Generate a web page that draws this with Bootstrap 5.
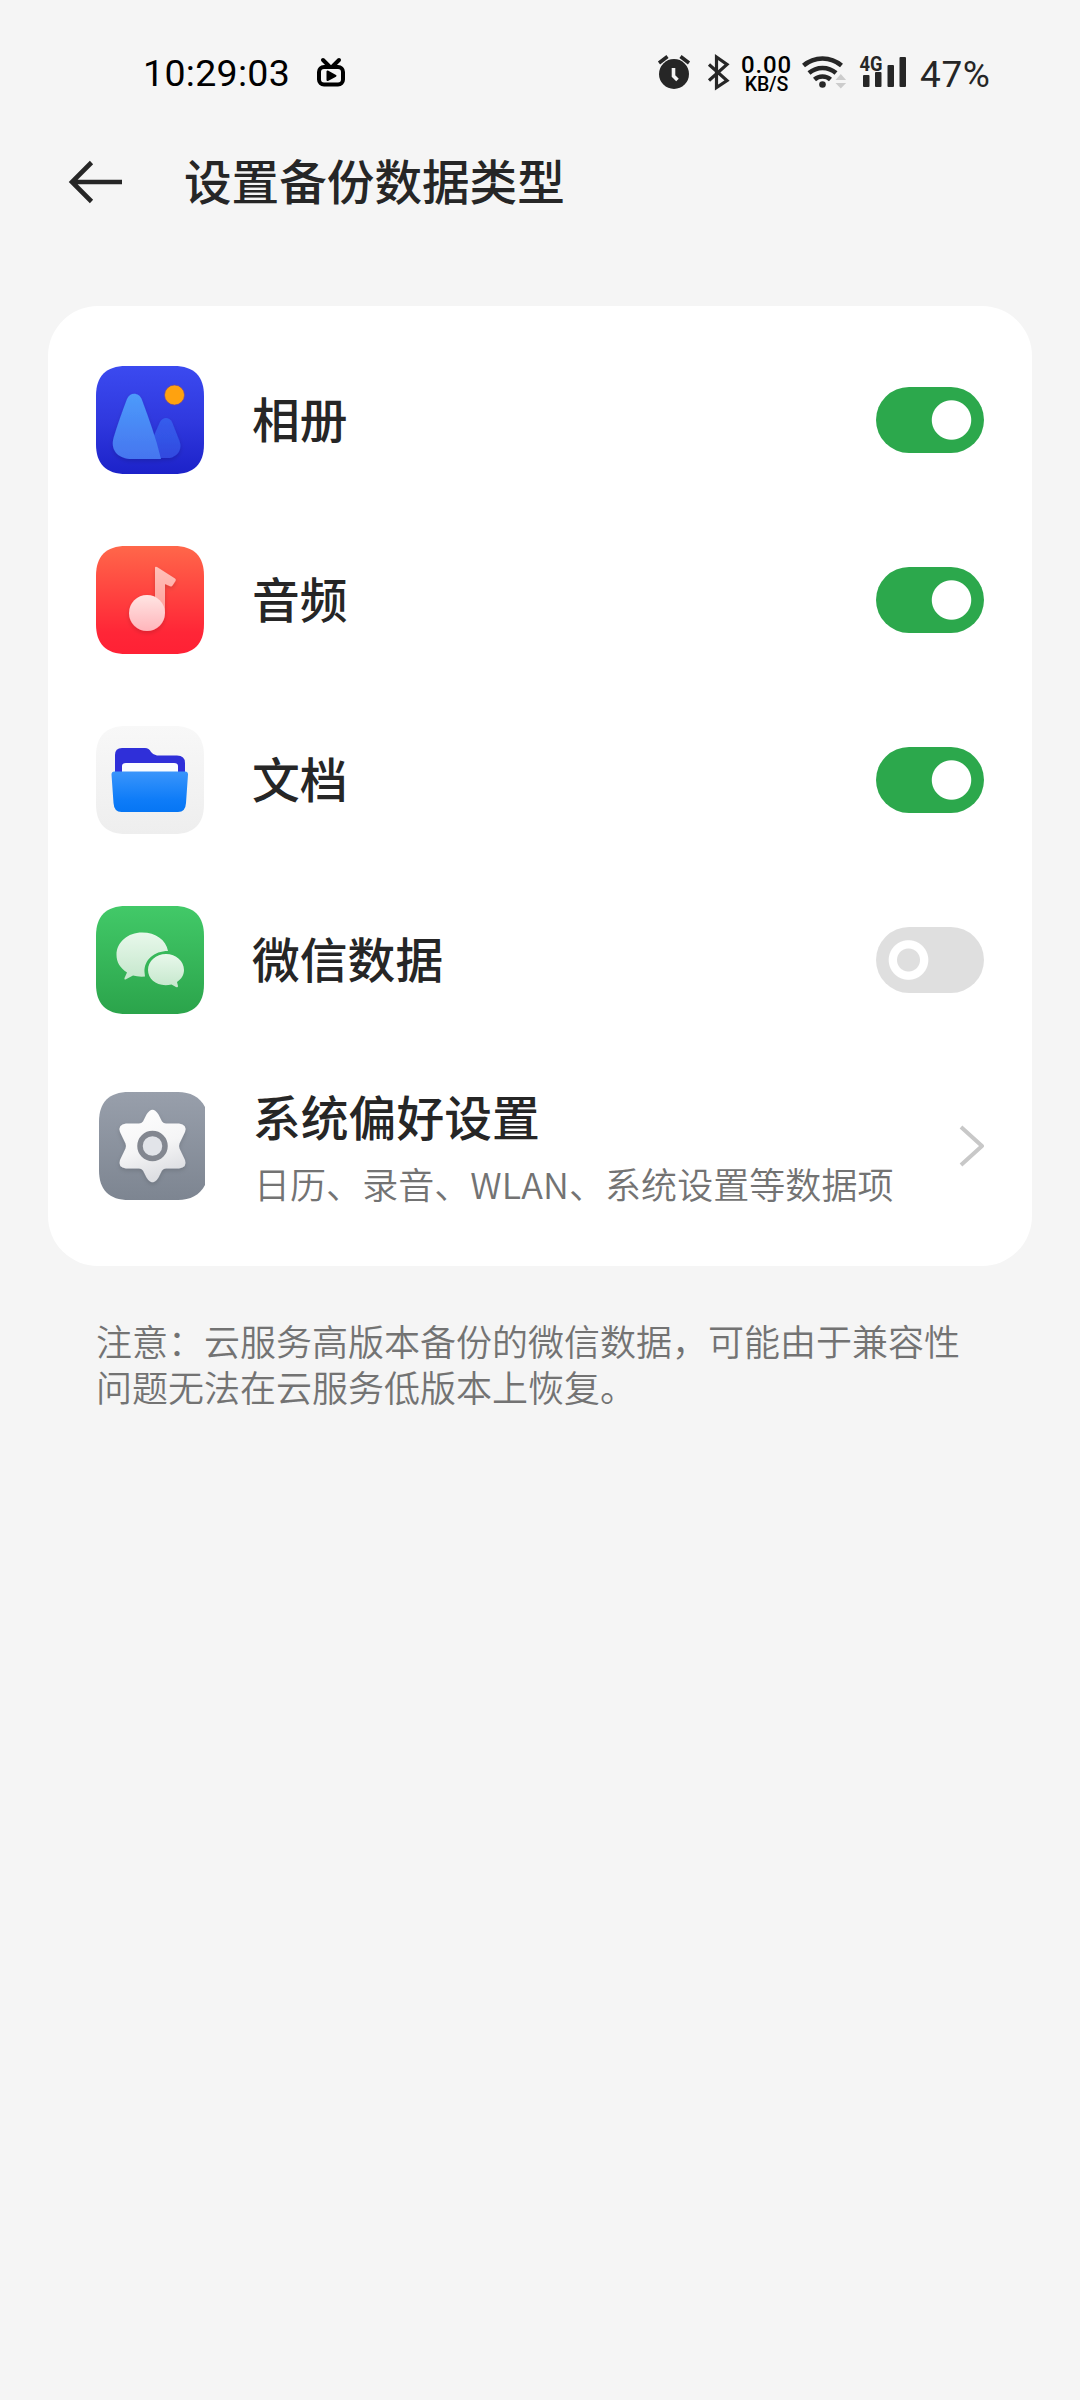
<!DOCTYPE html>
<html lang="zh-CN">
<head>
<meta charset="utf-8">
<meta name="viewport" content="width=device-width, initial-scale=1">
<title>设置备份数据类型</title>
<link rel="stylesheet" href="https://cdn.jsdelivr.net/npm/bootstrap@5.3.0/dist/css/bootstrap.min.css">
<style>
body{background:#f5f5f5;color:#262626;font-family:"Noto Sans CJK SC",sans-serif;min-height:2400px;overflow-x:hidden}
svg{display:block;flex:none}
.status-bar{height:146px;padding:0 89px 0 143px;font-family:Roboto,sans-serif;color:#000}
.clock{font-size:37.5px;line-height:146px;letter-spacing:.3px;width:174px}
.net{width:53px;margin-left:10px;text-align:center;font-weight:500;padding-top:53px}
.net-num{font-size:24px;line-height:24px;letter-spacing:.9px}
.net-unit{font-size:19.5px;line-height:15px;letter-spacing:-.1px}
.signal{margin-left:12px}
.battery{font-size:37px;line-height:149px;letter-spacing:.6px;color:#262626;margin-left:13px;width:71px;white-space:nowrap}
.app-bar{height:72px;padding-left:68px}
.page-title{font-size:47.6px;font-weight:500;line-height:68px;margin:0 0 0 60px;padding-bottom:4px}
.panel{margin:88px 48px 0;border:0;border-radius:50px;padding:24px 0;background:#fff;color:inherit}
.item{height:180px;padding:0 48px;border:0;background:transparent;color:inherit}
.item-tall{height:192px}
.item-label{font-size:47.8px;font-weight:500;line-height:56px;margin-left:48px;padding-bottom:4px;white-space:nowrap}
.item-sub{font-size:36px;line-height:44px;color:#737373;font-weight:350;white-space:nowrap;letter-spacing:.06px;margin:13px 0 0 49px}
.form-check-input.toggle{width:108px;height:66px;border:0;border-radius:33px;margin:0;box-shadow:none;float:none;
 background:radial-gradient(circle at 32.5px 33px,#dfdfdf 11px,#fff 12px,#fff 19.3px,#dfdfdf 20.3px);flex:none}
.form-check-input.toggle:checked{background:radial-gradient(circle at 75.5px 33px,#fff 19.2px,#2ca84c 20.2px)}
.notice{margin:50.5px 100px 0 96px;font-size:36px;line-height:46px;color:#737373;font-weight:350;white-space:nowrap}
</style>
</head>
<body>
<header class="status-bar d-flex align-items-start">
 <span class="clock">10:29:03</span>
 <svg class="me-auto" width="28" height="146" viewBox="317 0 28 146"><g fill="none" stroke="#000" stroke-width="4" stroke-linecap="round"><rect x="319" y="67" width="24" height="17.5" rx="5"/><path d="M323 60l6 6M339 60l-6 6"/></g><path d="M327.5 71.5v8.5l8-4.2z" stroke="#000" stroke-width="2" stroke-linejoin="round"/></svg>
 <svg width="73" height="146" viewBox="657 0 73 146"><circle cx="674" cy="74" r="15" fill="#262626"/><path d="M659 63l8.500-6.500M689 63l-8.500-6.500" stroke="#262626" stroke-width="3.600"/><path d="M673.500 68v8l4 4" fill="none" stroke="#f5f5f5" stroke-width="3.600"/><path d="M709 64.500l18 16-10.500 7V57l10.500 7.500-18 16" fill="none" stroke="#262626" stroke-width="3.200"/></svg>
 <div class="net"><div class="net-num">0.00</div><div class="net-unit">KB/S</div></div>
 <svg class="ms-2" width="46" height="146" viewBox="801 0 46 146"><g fill="none" stroke="#262626" stroke-width="4.500"><path d="M803.500 65.500a29 29 0 0 1 38 0"/><path d="M809 73a20.500 20.500 0 0 1 27 0"/><path d="M814.500 79.500a12 12 0 0 1 16 0"/></g><circle cx="822.500" cy="84.500" r="3.300" fill="#262626"/><path d="M835.500 80l5.300-6 5.300 6zM835.500 83h10.600l-5.300 5.500z" fill="#ccc"/></svg>
 <svg class="signal" width="48" height="146" viewBox="859 0 48 146"><g fill="#262626"><rect x="863" y="75" width="6.500" height="12" rx="1"/><rect x="875" y="72" width="6.500" height="15" rx="1"/><rect x="887.500" y="65" width="6.500" height="22" rx="1"/><rect x="899.500" y="57" width="6.500" height="30" rx="1"/></g><text x="859.500" y="70.500" font-family="Roboto" font-weight="700" font-size="21" textLength="23" lengthAdjust="spacingAndGlyphs" fill="#262626" stroke="#f5f5f5" stroke-width="2" paint-order="stroke">4G</text></svg>
 <span class="battery">47%</span>
</header>
<nav class="app-bar d-flex align-items-center">
 <svg width="56" height="72" viewBox="68 146 56 72"><path d="M122 182H72M91.500 162.500L72 182l19.500 19.500" fill="none" stroke="#262626" stroke-width="4.600"/></svg>
 <h1 class="page-title">设置备份数据类型</h1>
</nav>
<main>
<div class="card panel"><div class="list-group list-group-flush">
 <label class="list-group-item item d-flex align-items-center">
  <svg width="108" height="108" viewBox="0 0 108 108"><defs><linearGradient id="ga" x2="0" y2="1"><stop stop-color="#3b4af0"/><stop offset=".5" stop-color="#3039df"/><stop offset="1" stop-color="#1c22c9"/></linearGradient><linearGradient id="gb" x2="0" y2="1"><stop stop-color="#4d9bfb"/><stop offset="1" stop-color="#4575ef"/></linearGradient><linearGradient id="gc" x2="0" y2="1"><stop stop-color="#365ded"/><stop offset="1" stop-color="#304adf"/></linearGradient><filter id="sh" x="-20%" y="-20%" width="140%" height="150%"><feDropShadow dx="0" dy="2" stdDeviation="2" flood-color="#000" flood-opacity=".15"/></filter></defs>
  <path d="M30 0H78C98 0 108 10 108 30V78C108 98 98 108 78 108H30C10 108 0 98 0 78V30C0 10 10 0 30 0Z" fill="url(#ga)"/>
  <g filter="url(#sh)"><path d="M56 74L64 56C67 50.500 73 50.500 76 56L83.500 75C87 84 80 92 72 92H56Z" fill="url(#gc)"/><path d="M31 33C34 26 43 26 46 34C53 53 60 72 65 93H36C23 93 14 85 17.500 72C21 60 26 46 31 33Z" fill="url(#gb)"/></g><circle cx="78.500" cy="29" r="10" fill="#ffa20f" stroke="#73478f" stroke-width=".7"/></svg>
  <span class="item-label me-auto">相册</span><input class="form-check-input toggle" type="checkbox" role="switch" checked>
 </label>
 <label class="list-group-item item d-flex align-items-center">
  <svg width="108" height="108" viewBox="0 0 108 108"><defs><linearGradient id="gd" x2="0" y2="1"><stop stop-color="#ff674a"/><stop offset=".8" stop-color="#ff2637"/><stop offset="1" stop-color="#ff2135"/></linearGradient><linearGradient id="ge" x2="0" y2="1"><stop stop-color="#ffc1b9"/><stop offset="1" stop-color="#ffa09c"/></linearGradient><linearGradient id="gf" x2="0" y2="1"><stop stop-color="#ffe5e3"/><stop offset="1" stop-color="#ffb5bb"/></linearGradient></defs>
  <path d="M30 0H78C98 0 108 10 108 30V78C108 98 98 108 78 108H30C10 108 0 98 0 78V30C0 10 10 0 30 0Z" fill="url(#gd)"/>
  <g filter="url(#sh)"><path d="M59 22Q59 20 61 21L79 32.500Q80.500 33.500 79.500 35L76.500 39.500Q75.500 41 73.500 40L69 38V67H59Z" fill="url(#ge)"/><circle cx="51" cy="67" r="18" fill="url(#gf)"/></g></svg>
  <span class="item-label me-auto">音频</span><input class="form-check-input toggle" type="checkbox" role="switch" checked>
 </label>
 <label class="list-group-item item d-flex align-items-center">
  <svg width="108" height="108" viewBox="0 0 108 108"><defs><linearGradient id="gg" x2="0" y2="1"><stop stop-color="#f8f8f8"/><stop offset="1" stop-color="#eee"/></linearGradient><linearGradient id="gh" x2="0" y2="1"><stop stop-color="#3a95fb"/><stop offset=".7" stop-color="#0e7cf8"/><stop offset="1" stop-color="#0676f4"/></linearGradient></defs>
  <path d="M30 0H78C98 0 108 10 108 30V78C108 98 98 108 78 108H30C10 108 0 98 0 78V30C0 10 10 0 30 0Z" fill="url(#gg)"/>
  <path d="M19 50V29Q19 22 26 22H49Q53 22 55 26Q57 29 61 29.500H81Q89 29.500 89 37V50Z" fill="#2f2fd9"/><path d="M26 50V40Q26 37 30 37H78Q82 37 82 40V50Z" fill="#fafcff"/><path d="M18.500 45.500H89Q92 45.500 92 48.500L90 77Q89.500 86 82 86H25.500Q18 86 17.500 77L15.500 48.500Q15.500 45.500 18.500 45.500Z" fill="url(#gh)"/></svg>
  <span class="item-label me-auto">文档</span><input class="form-check-input toggle" type="checkbox" role="switch" checked>
 </label>
 <label class="list-group-item item d-flex align-items-center">
  <svg width="108" height="108" viewBox="0 0 108 108"><defs><linearGradient id="gi" x2="0" y2="1"><stop stop-color="#42c968"/><stop offset="1" stop-color="#2ba44b"/></linearGradient><linearGradient id="gk" x2="0" y2="1"><stop stop-color="#e8f8eb"/><stop offset="1" stop-color="#c5e7cc"/></linearGradient></defs>
  <path d="M30 0H78C98 0 108 10 108 30V78C108 98 98 108 78 108H30C10 108 0 98 0 78V30C0 10 10 0 30 0Z" fill="url(#gi)"/>
  <path d="M46 26.500C60 26.500 70 34 72 45C58 45 48 54 48.500 66L49 70.500Q42 71 37 69.500L29.500 73.500Q28 74 28.500 72L31 66.500C24 62 20.500 56 20.500 49C20.500 36 32 26.500 46 26.500Z" fill="url(#gk)"/><path d="M70 48C80 48 88 55 88 64C88 69 85.500 73 81 76L82 80Q82 82 80 81L75.500 78.500C62 81.500 52 74 52 64C52 55 60 48 70 48Z" fill="url(#gk)"/></svg>
  <span class="item-label me-auto">微信数据</span><input class="form-check-input toggle" type="checkbox" role="switch">
 </label>
 <a href="#" class="list-group-item item item-tall d-flex align-items-center">
  <svg width="109" height="108" viewBox="0 0 109 108"><defs><linearGradient id="gl" x2="0" y2="1"><stop stop-color="#989fab"/><stop offset="1" stop-color="#7d8591"/></linearGradient><linearGradient id="gm" x2=".3" y2="1"><stop stop-color="#fff"/><stop offset=".6" stop-color="#f5f5f6"/><stop offset="1" stop-color="#dedfe3"/></linearGradient></defs>
  <path d="M33 0H82C94 0 104 5 109 15V93C104 103 94 108 82 108H33C13 108 3 98 3 78V30C3 10 13 0 33 0Z" fill="url(#gl)"/>
  <path filter="url(#sh)" d="M50.500 22.500Q56.500 13 62.500 22.500L66 29.500Q67.500 31.500 70 31.500H83Q91.500 32.500 89 40L83.500 51.500Q82.500 54 83.500 56.500L89 68Q91.500 75.500 83 76.500H70Q67.500 76.500 66 78.500L62.500 85.500Q56.500 95 50.500 85.500L47 78.500Q45.500 76.500 43 76.500H30Q21.500 75.500 24 68L29.500 56.500Q30.500 54 29.500 51.500L24 40Q21.500 32.500 30 31.500H43Q45.500 31.500 47 29.500Z" fill="url(#gm)"/><circle cx="56.500" cy="54" r="12.500" fill="#e2e4e9" stroke="#838790" stroke-width="5.500"/></svg>
  <div class="me-auto"><div class="item-label">系统偏好设置</div><div class="item-sub">日历、录音、WLAN、系统设置等数据项</div></div>
  <svg width="25" height="44" viewBox="1 0 25 44"><path d="M3 3L24 22L3 41" fill="none" stroke="#c8c8c8" stroke-width="4" stroke-linejoin="round"/></svg>
 </a>
</div></div>
<p class="notice">注意：云服务高版本备份的微信数据，可能由于兼容性<br>问题无法在云服务低版本上恢复。</p>
</main>
<script src="https://cdn.jsdelivr.net/npm/bootstrap@5.3.0/dist/js/bootstrap.bundle.min.js"></script>
</body>
</html>
